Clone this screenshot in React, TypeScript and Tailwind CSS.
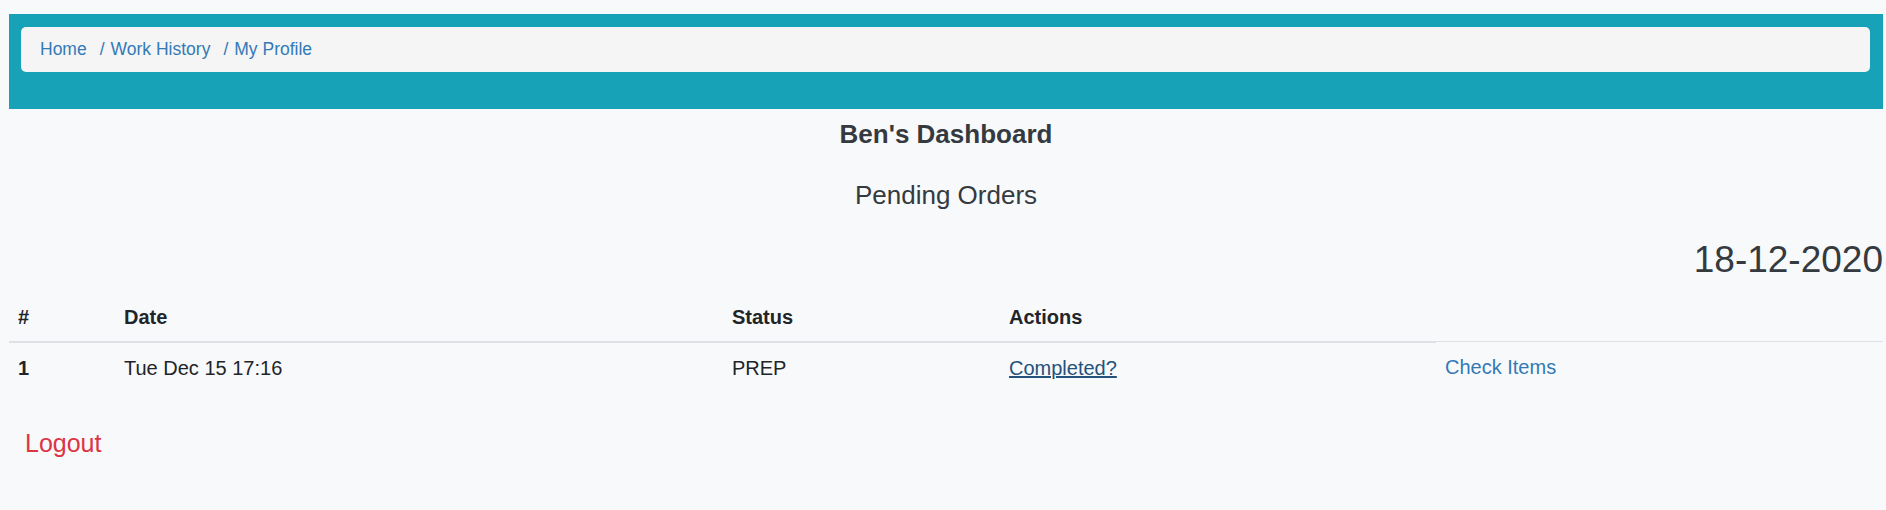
import React from 'react'

const font = { fontFamily: '"Liberation Sans", Arial, Helvetica, sans-serif' }

function Breadcrumb() {
    return (
        <div className="bg-[#17a2b8] pl-[12px] pr-[13px] pt-[13px] pb-[37px]">
            <ol className="flex items-center rounded-[5px] bg-[#f5f5f5] px-[19px] py-[10px] text-[17.5px] leading-[25px] text-[#337ab7]">
                <li><a href="#">Home</a></li>
                <li className="ml-[13px] mr-[6px]">/</li>
                <li><a href="#">Work History</a></li>
                <li className="ml-[13px] mr-[6px]">/</li>
                <li><a href="#">My Profile</a></li>
            </ol>
        </div>
    )
}

function OrdersTable() {
    return (
        <div className="mt-[10px] text-[20px] leading-[30px] text-[#212529]">
            <div className="grid grid-cols-[106px_608px_277px_436px_1fr] font-bold">
                <div className="border-b-2 border-[#dee2e6] pl-[9px] pt-[10px] pb-[9px]">#</div>
                <div className="border-b-2 border-[#dee2e6] pl-[9px] pt-[10px] pb-[9px]">Date</div>
                <div className="border-b-2 border-[#dee2e6] pl-[9px] pt-[10px] pb-[9px]">Status</div>
                <div className="border-b-2 border-[#dee2e6] pl-[9px] pt-[10px] pb-[9px]">Actions</div>
                <div className="h-[50px] self-start border-b border-[#dee2e6]"></div>
            </div>
            <div className="grid grid-cols-[106px_608px_277px_436px_1fr]">
                <div className="pl-[9px] py-[10px] font-bold">1</div>
                <div className="pl-[9px] py-[10px]">Tue Dec 15 17:16</div>
                <div className="pl-[9px] py-[10px]">PREP</div>
                <div className="pl-[9px] py-[10px]">
                    <a href="#" className="text-[#23527c] underline">Completed?</a>
                </div>
                <div className="pl-[9px] pt-[9px] pb-[11px]">
                    <a href="#" className="text-[#337ab7]">Check Items</a>
                </div>
            </div>
        </div>
    )
}

export default function App() {
    return (
        <div className="min-h-screen bg-[#f8f9fa] pl-[9px] pr-[3px] pt-[14px]" style={font}>
            <Breadcrumb />
            <h3 className="mt-[10px] text-center text-[26px] leading-[31px] font-bold text-[#343a40]">
                Ben's Dashboard
            </h3>
            <h4 className="mt-[30px] text-center text-[26px] leading-[31px] text-[#343a40]">
                Pending Orders
            </h4>
            <div className="mt-[27px] text-right text-[37px] leading-[44px] text-[#343a40]">
                18-12-2020
            </div>
            <OrdersTable />
            <div className="mt-[32px] px-[16px]">
                <a href="#" className="text-[25px] leading-[37.5px] text-[#dc3545]">Logout</a>
            </div>
        </div>
    )
}
